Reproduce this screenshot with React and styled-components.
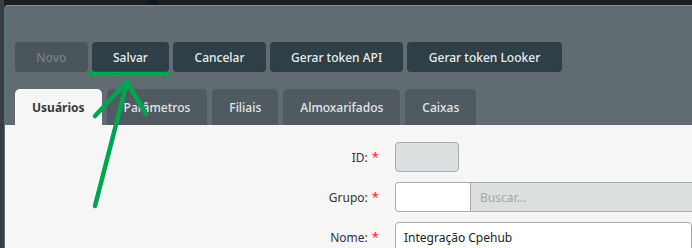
import React from "react";
import styled, { createGlobalStyle } from "styled-components";

const GlobalStyle = createGlobalStyle`
  html, body {
    margin: 0;
    padding: 0;
    background: #1b1e21;
    overflow: hidden;
  }
  body {
    font-family: "Noto Sans", "Open Sans", sans-serif;
    font-size: 12px;
  }
`;

const Page = styled.div`
  position: relative;
  width: 692px;
  height: 248px;
  background: linear-gradient(to right, #3a3d3f 0 4px, #1b1e21 4px);
  padding: 5px 0 0 4px;
  box-sizing: border-box;
`;

const TopDark = styled.div`
  position: absolute;
  top: 0;
  left: 148px;
  width: 10px;
  height: 5px;
  background: #0c1920;
`;

const Modal = styled.div`
  display: flex;
  flex-direction: column;
  height: 100%;
  background: #616c72;
  border-top: 1px solid #858e93;
  border-left: 1px solid #53707e;
  border-top-left-radius: 4px;
  overflow: hidden;
`;

const Header = styled.div`
  padding: 36px 0 0 10px;
`;

const Toolbar = styled.div`
  display: flex;
  gap: 4px;
`;

const Button = styled.button`
  height: 30px;
  padding: 0 21.3px;
  border: none;
  border-radius: 4px;
  font-family: inherit;
  font-size: 12px;
  font-weight: 500;
  background: ${({ disabled }) => (disabled ? "#4a565c" : "#2f3f47")};
  color: ${({ disabled }) => (disabled ? "#75828a" : "#e9edef")};
  cursor: pointer;
`;

const Tabs = styled.div`
  display: flex;
  gap: 5px;
  margin-top: 17px;
`;

const Tab = styled.div`
  height: 36px;
  padding: 0 17px;
  display: flex;
  align-items: center;
  border-radius: 5px 5px 0 0;
  font-size: 12px;
  font-weight: ${({ active }) => (active ? 700 : 500)};
  background: ${({ active }) => (active ? "#f6f6f6" : "#4f5b61")};
  color: ${({ active }) => (active ? "#333a3e" : "#e3e7e9")};
`;

const Body = styled.div`
  flex: 1;
  background: #f6f6f6;
  padding-top: 17px;
`;

const Form = styled.div`
  display: grid;
  grid-template-columns: 374px 1fr;
  column-gap: 16px;
  row-gap: 10px;
`;

const Label = styled.label`
  display: flex;
  align-items: center;
  justify-content: flex-end;
  gap: 4px;
  height: 30px;
  color: #333;
  font-size: 12px;
`;

const Required = styled.span`
  color: #e8262b;
  font-size: 13px;
`;

const Input = styled.div`
  height: 30px;
  box-sizing: border-box;
  width: ${({ width }) => width || "auto"};
  border: 1px solid #a8acae;
  border-radius: 4px;
  background: ${({ readOnly }) => (readOnly ? "#dcdfe0" : "#fff")};
  display: flex;
  align-items: center;
  padding: 0 8px;
  color: #222;
  font-size: 12px;
  overflow: hidden;
`;

const Lookup = styled.div`
  display: flex;
  height: 30px;
  box-sizing: border-box;
  border: 1px solid #a8acae;
  border-right: none;
  border-radius: 4px 0 0 4px;
  overflow: hidden;
`;

const LookupCode = styled.div`
  width: 74px;
  background: #fff;
  border-right: 1px solid #a8acae;
`;

const LookupSearch = styled.div`
  flex: 1;
  background: #dcdfe0;
  color: #a3a7a9;
  display: flex;
  align-items: center;
  padding-left: 9px;
`;

const Overlay = styled.svg`
  position: absolute;
  left: 0;
  top: 0;
  pointer-events: none;
`;

const App = () => {
  return (
    <>
      <GlobalStyle />
      <Page>
        <TopDark />
        <Modal>
          <Header>
            <Toolbar>
              <Button disabled>Novo</Button>
              <Button>Salvar</Button>
              <Button>Cancelar</Button>
              <Button>Gerar token API</Button>
              <Button>Gerar token Looker</Button>
            </Toolbar>
            <Tabs>
              <Tab active>Usuários</Tab>
              <Tab>Parâmetros</Tab>
              <Tab>Filiais</Tab>
              <Tab>Almoxarifados</Tab>
              <Tab>Caixas</Tab>
            </Tabs>
          </Header>
          <Body>
            <Form>
              <Label>
                ID: <Required>*</Required>
              </Label>
              <Input readOnly width="64px" />
              <Label>
                Grupo: <Required>*</Required>
              </Label>
              <Lookup>
                <LookupCode />
                <LookupSearch>Buscar...</LookupSearch>
              </Lookup>
              <Label>
                Nome: <Required>*</Required>
              </Label>
              <Input>Integração Cpehub</Input>
            </Form>
          </Body>
        </Modal>
        <Overlay width="692" height="248" viewBox="0 0 692 248">
          <g stroke="#00a551" strokeWidth="4.5" strokeLinecap="round" fill="none">
            <line x1="90" y1="74" x2="168" y2="74" />
            <line x1="95" y1="206" x2="127" y2="82" />
            <polyline points="95,116 127,82 146,114" strokeLinejoin="round" />
          </g>
        </Overlay>
      </Page>
    </>
  );
};

export default App;
